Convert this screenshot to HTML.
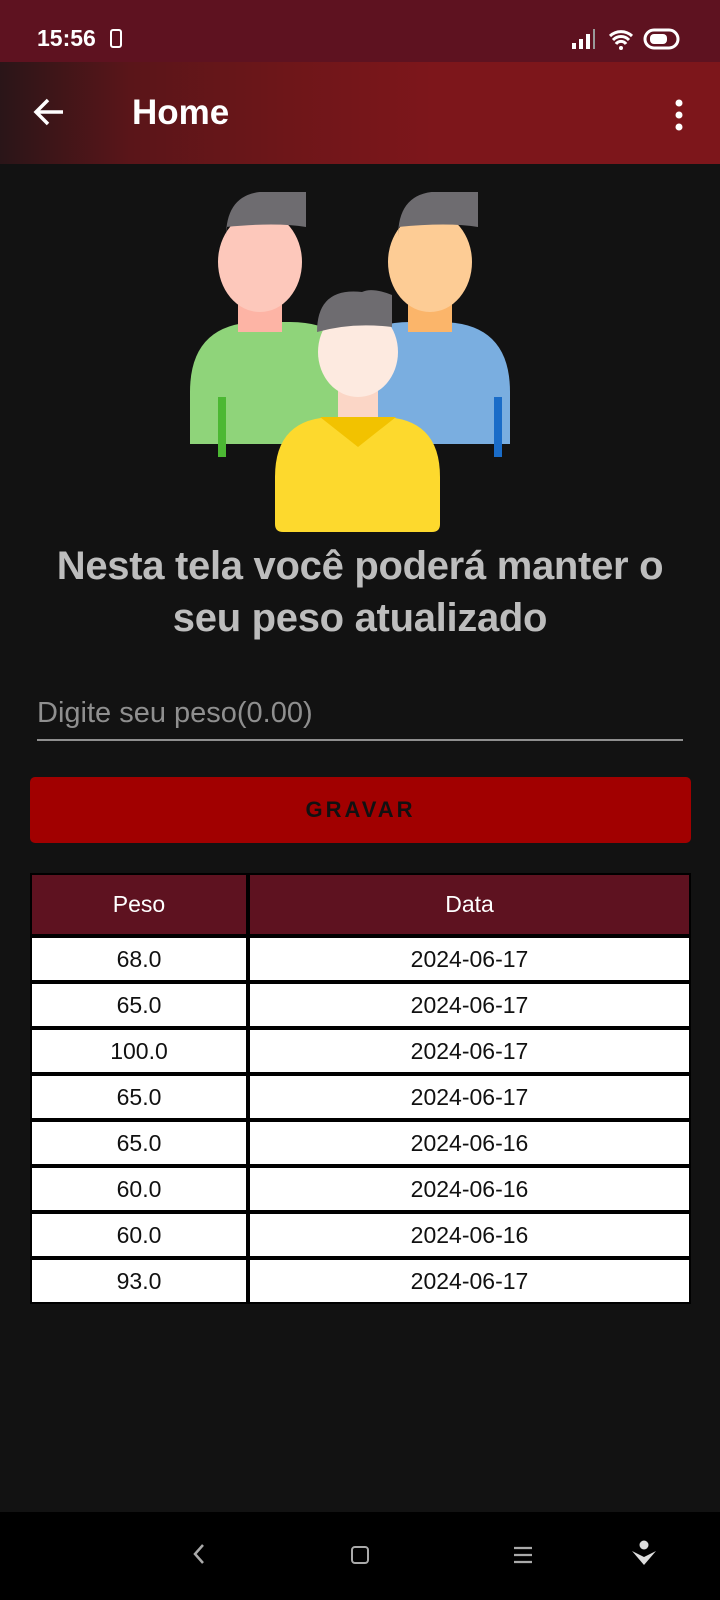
<!DOCTYPE html>
<html><head><meta charset="utf-8"><style>
*{margin:0;padding:0;box-sizing:border-box}
body{width:720px;height:1600px;background:#121212;font-family:"Liberation Sans",sans-serif;position:relative;overflow:hidden}
.status{position:absolute;top:0;left:0;width:720px;height:62px;background:#5e1220;color:#fff}
.app{position:absolute;top:62px;left:0;width:720px;height:102px;background:linear-gradient(90deg,#2a1518 0%,#5a1519 18%,#6e1619 40%,#7d161b 60%,#7d161b 100%)}
.title{position:absolute;left:0;width:720px;text-align:center;color:#bdbdbd;font-weight:bold;font-size:40px;line-height:52px;letter-spacing:-0.3px}
table{position:absolute;left:30px;top:873px;width:661px;border-collapse:separate;border-spacing:0;background:#000}
td{background:#fff;text-align:center;font-size:23px;color:#111;height:46px;border:2px solid #000}
th{background:#5e1220;color:#fff;font-weight:normal;font-size:23px;height:63px;border:2px solid #000}
.nav{position:absolute;top:1512px;left:0;width:720px;height:88px;background:#000}
</style></head><body>
<div class="status">
<div style="position:absolute;left:37px;top:25px;font-size:23px;font-weight:bold">15:56</div>
<div style="position:absolute;left:110px;top:29px;width:12px;height:19px;border:2.5px solid #fff;border-radius:3px"></div>
<svg style="position:absolute;left:568px;top:26px" width="120" height="26">
<rect x="4" y="17" width="4" height="6" fill="#fff"/><rect x="11" y="13" width="4" height="10" fill="#fff"/><rect x="18" y="8" width="4" height="15" fill="#fff"/><rect x="25" y="3" width="2" height="20" fill="#999"/>
<path d="M42 10a16 16 0 0 1 22 0M45 14a11 11 0 0 1 16 0M48 18a6 6 0 0 1 10 0" stroke="#fff" stroke-width="3" fill="none"/><circle cx="53" cy="22" r="2" fill="#fff"/>
<rect x="77" y="4" width="33" height="18" rx="9" stroke="#fff" stroke-width="3" fill="none"/><rect x="82" y="8" width="17" height="10" rx="4" fill="#fff"/>
</svg>
</div>
<div class="app">
<svg style="position:absolute;left:33px;top:35px" width="32" height="30"><path d="M30 15H4M15 3L3 15l12 12" stroke="#fff" stroke-width="3.5" fill="none"/></svg>
<div style="position:absolute;left:132px;top:31px;color:#fff;font-size:35px;font-weight:bold">Home</div>
<svg style="position:absolute;left:672px;top:36px" width="14" height="34"><circle cx="7" cy="5" r="3.5" fill="#fff"/><circle cx="7" cy="17" r="3.5" fill="#fff"/><circle cx="7" cy="29" r="3.5" fill="#fff"/></svg>
</div>
<svg style="position:absolute;left:190px;top:192px" width="340" height="342">
<path d="M0 200q0-70 70-70h30q70 0 70 70v52H0z" fill="#8fd47a"/>
<rect x="28" y="205" width="8" height="60" fill="#4cb833"/>
<rect x="48" y="100" width="44" height="40" fill="#fdb4a5"/>
<ellipse cx="70" cy="70" rx="42" ry="50" fill="#fdc8bb"/>
<path d="M36 45q0-50 50-45q10-10 30 0v35q-30 -5-80 0z" fill="#6e6c70"/>
<path d="M150 200q0-70 70-70h30q70 0 70 70v52H150z" fill="#7aaee0"/>
<rect x="304" y="205" width="8" height="60" fill="#1a6cc8"/>
<rect x="218" y="100" width="44" height="40" fill="#fbb56a"/>
<ellipse cx="240" cy="70" rx="42" ry="50" fill="#fdcc95"/>
<path d="M208 45q0-50 50-45q10-10 30 0v35q-30 -5-80 0z" fill="#6e6c70"/>
<path d="M85 285q0-60 60-60h45q60 0 60 60v47q0 8-8 8H93q-8 0-8-8z" fill="#fdd92d"/>
<path d="M130 225l38 30 38-30z" fill="#f2c200"/>
<rect x="148" y="185" width="40" height="40" fill="#fbd6c6"/>
<ellipse cx="168" cy="160" rx="40" ry="45" fill="#fdeae0"/>
<path d="M127 140q0-45 45-40q10-5 30 3v32q-40 -5-75 5z" fill="#6e6c70"/>
</svg>
<div class="title" style="top:540px">Nesta tela você poderá manter o<br>seu peso atualizado</div>
<div style="position:absolute;left:37px;top:697px;color:#8f8f8f;font-size:29px">Digite seu peso(0.00)</div>
<div style="position:absolute;left:37px;top:739px;width:646px;height:2px;background:#8f8f8f"></div>
<div style="position:absolute;left:30px;top:777px;width:661px;height:66px;background:#a10000;border-radius:5px;color:#111;font-size:22px;font-weight:bold;letter-spacing:3px;text-align:center;line-height:66px">GRAVAR</div>
<table>
<tr><th style="width:218px">Peso</th><th>Data</th></tr>
<tr><td>68.0</td><td>2024-06-17</td></tr>
<tr><td>65.0</td><td>2024-06-17</td></tr>
<tr><td>100.0</td><td>2024-06-17</td></tr>
<tr><td>65.0</td><td>2024-06-17</td></tr>
<tr><td>65.0</td><td>2024-06-16</td></tr>
<tr><td>60.0</td><td>2024-06-16</td></tr>
<tr><td>60.0</td><td>2024-06-16</td></tr>
<tr><td>93.0</td><td>2024-06-17</td></tr>
</table>
<div class="nav">
<svg style="position:absolute;left:190px;top:30px" width="20" height="24"><path d="M13 3L5 12l8 9" stroke="#aaa" stroke-width="2.5" fill="none"/></svg>
<div style="position:absolute;left:351px;top:34px;width:18px;height:18px;border:2.5px solid #aaa;border-radius:4px"></div>
<svg style="position:absolute;left:513px;top:34px" width="20" height="18"><path d="M1 2h18M1 9h18M1 16h18" stroke="#aaa" stroke-width="2.2"/></svg>
<svg style="position:absolute;left:631px;top:28px" width="26" height="28"><circle cx="13" cy="5" r="4.5" fill="#ddd"/><path d="M1 11l12 14 12-14-12 6z" fill="#ddd"/></svg>
</div>
</body></html>
